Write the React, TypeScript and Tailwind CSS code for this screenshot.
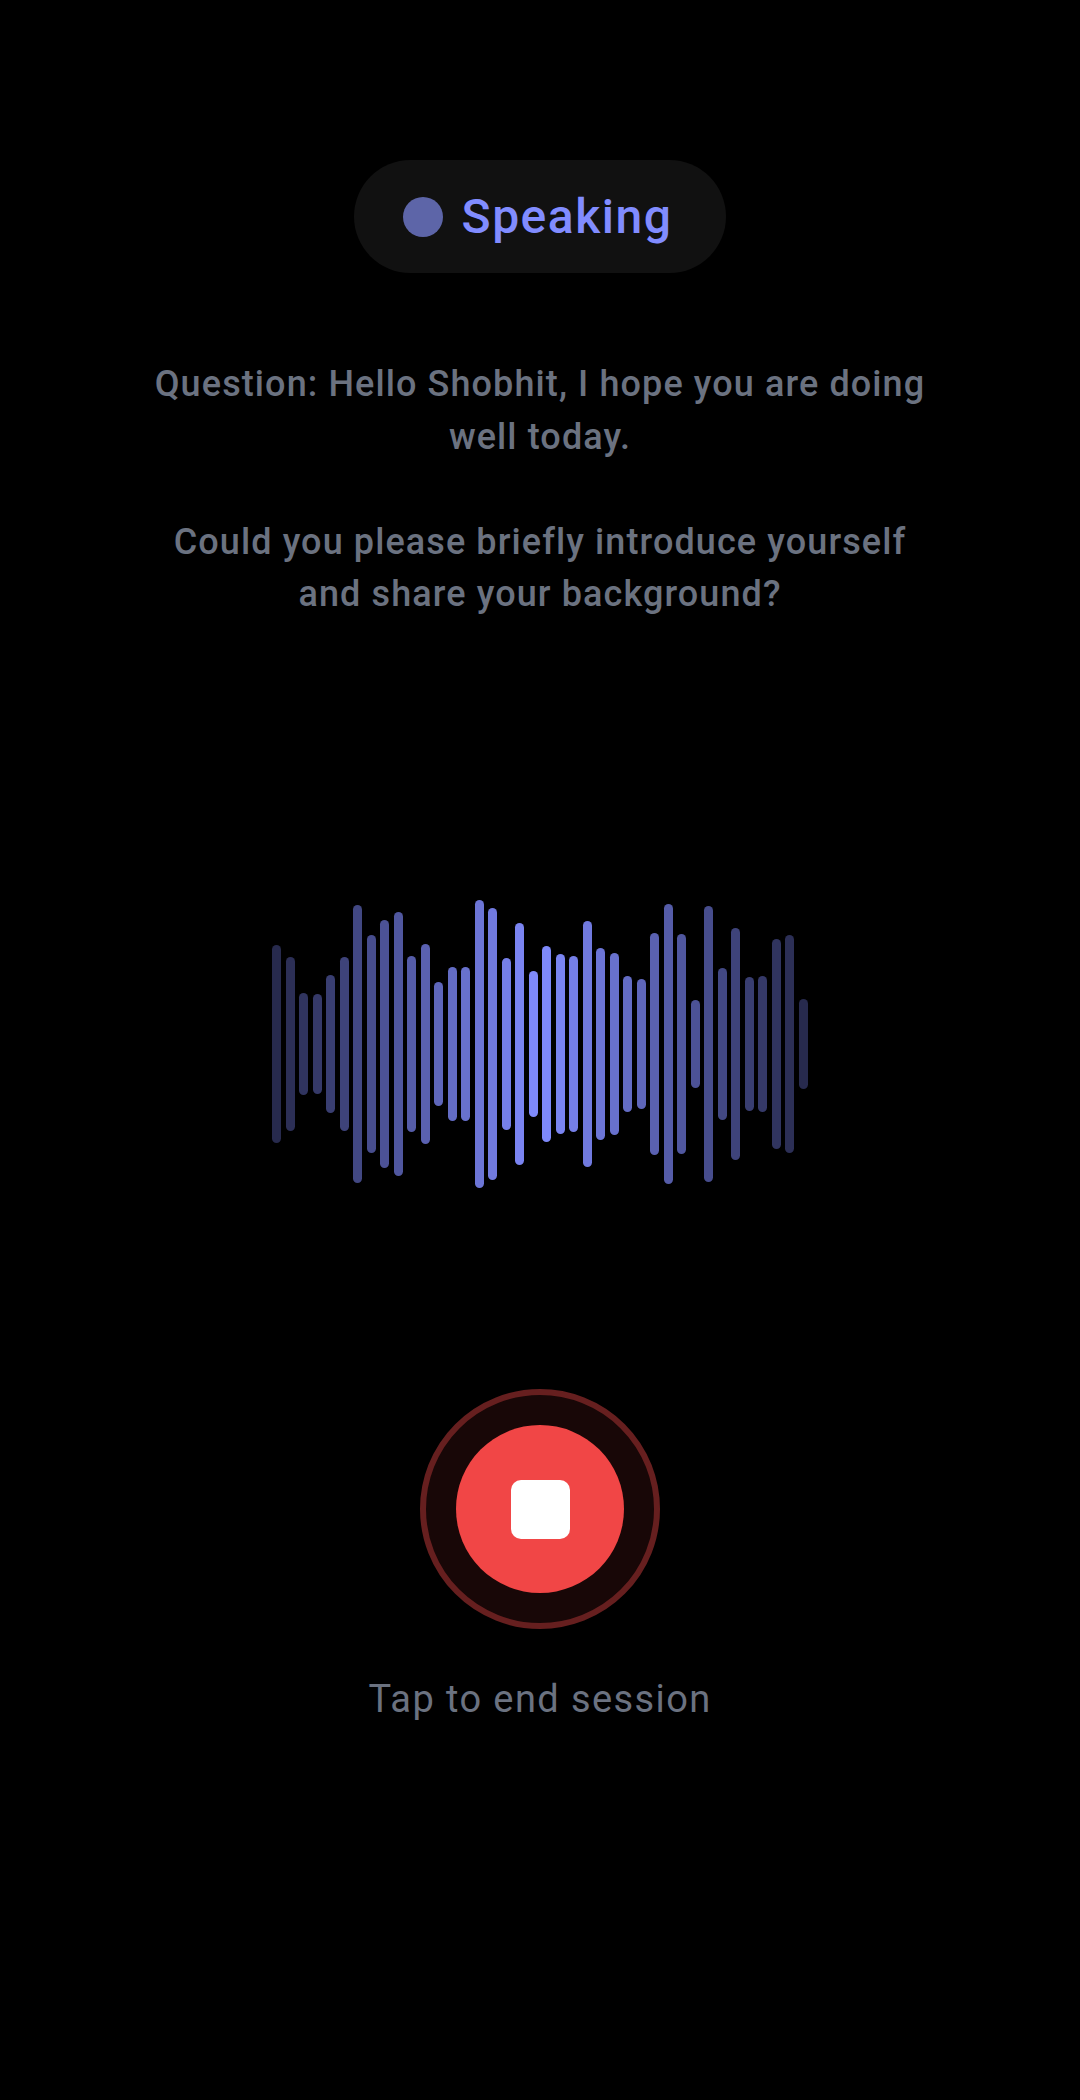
const question =
  'Question: Hello Shobhit, I hope you are doing well today.\n\nCould you please briefly introduce yourself and share your background?';

// top and bottom of each bar, read off the reference (px below the wave's top edge)
const bars: [number, number][] = [
  [55, 253], [67, 241], [103, 205], [104, 204], [85, 223], [67, 241], [15, 293],
  [45, 263], [30, 278], [22, 286], [66, 242], [54, 254], [92, 216], [77, 231],
  [77, 231], [10, 298], [18, 290], [68, 240], [33, 275], [81, 227], [56, 252],
  [64, 244], [66, 242], [31, 277], [58, 250], [63, 245], [86, 222], [89, 219],
  [43, 265], [14, 294], [44, 264], [110, 198], [16, 292], [78, 230], [38, 270],
  [87, 221], [86, 222], [49, 259], [45, 263], [109, 199],
];

function Waveform() {
  return (
    <div className="flex h-[308px] w-[550px] items-start justify-center gap-[4.5px]">
      {bars.map(([top, bottom], i) => (
        <div
          key={i}
          className="w-[9px] shrink-0 rounded-full bg-[#818cff]"
          style={{
            marginTop: top,
            height: bottom - top,
            opacity: 1 - (0.7 * Math.abs(i - 19.5)) / 19.5,
          }}
        />
      ))}
    </div>
  );
}

export default function App() {
  return (
    <div className="flex min-h-screen flex-col items-center bg-black pt-[160px] font-['Roboto',sans-serif]">
      <div className="flex h-[113px] w-[372px] items-center justify-center gap-[19px] rounded-full bg-[#111111] pr-[5px]">
        <span className="h-[40px] w-[40px] rounded-full bg-[#5d65a8]" />
        <span className="text-[48px] leading-none font-medium tracking-[1.5px] text-[#818cff]">Speaking</span>
      </div>

      <p className="mt-[85px] w-[792px] text-center text-[36px] leading-[52.5px] font-medium tracking-[1.1px] whitespace-pre-line text-[#6b7280]">
        {question}
      </p>

      <div className="mt-[269.5px]">
        <Waveform />
      </div>

      <button className="mt-[191px] flex h-[240px] w-[240px] items-center justify-center rounded-full border-[6px] border-[#661f1f] bg-[#180707]">
        <span className="flex h-[168px] w-[168px] items-center justify-center rounded-full bg-[#f14646]">
          <span className="h-[59px] w-[59px] rounded-[10px] bg-white" />
        </span>
      </button>

      <p className="mt-[44px] text-[38px] leading-[52px] tracking-[1.4px] text-[#6b7280]">Tap to end session</p>
    </div>
  );
}
